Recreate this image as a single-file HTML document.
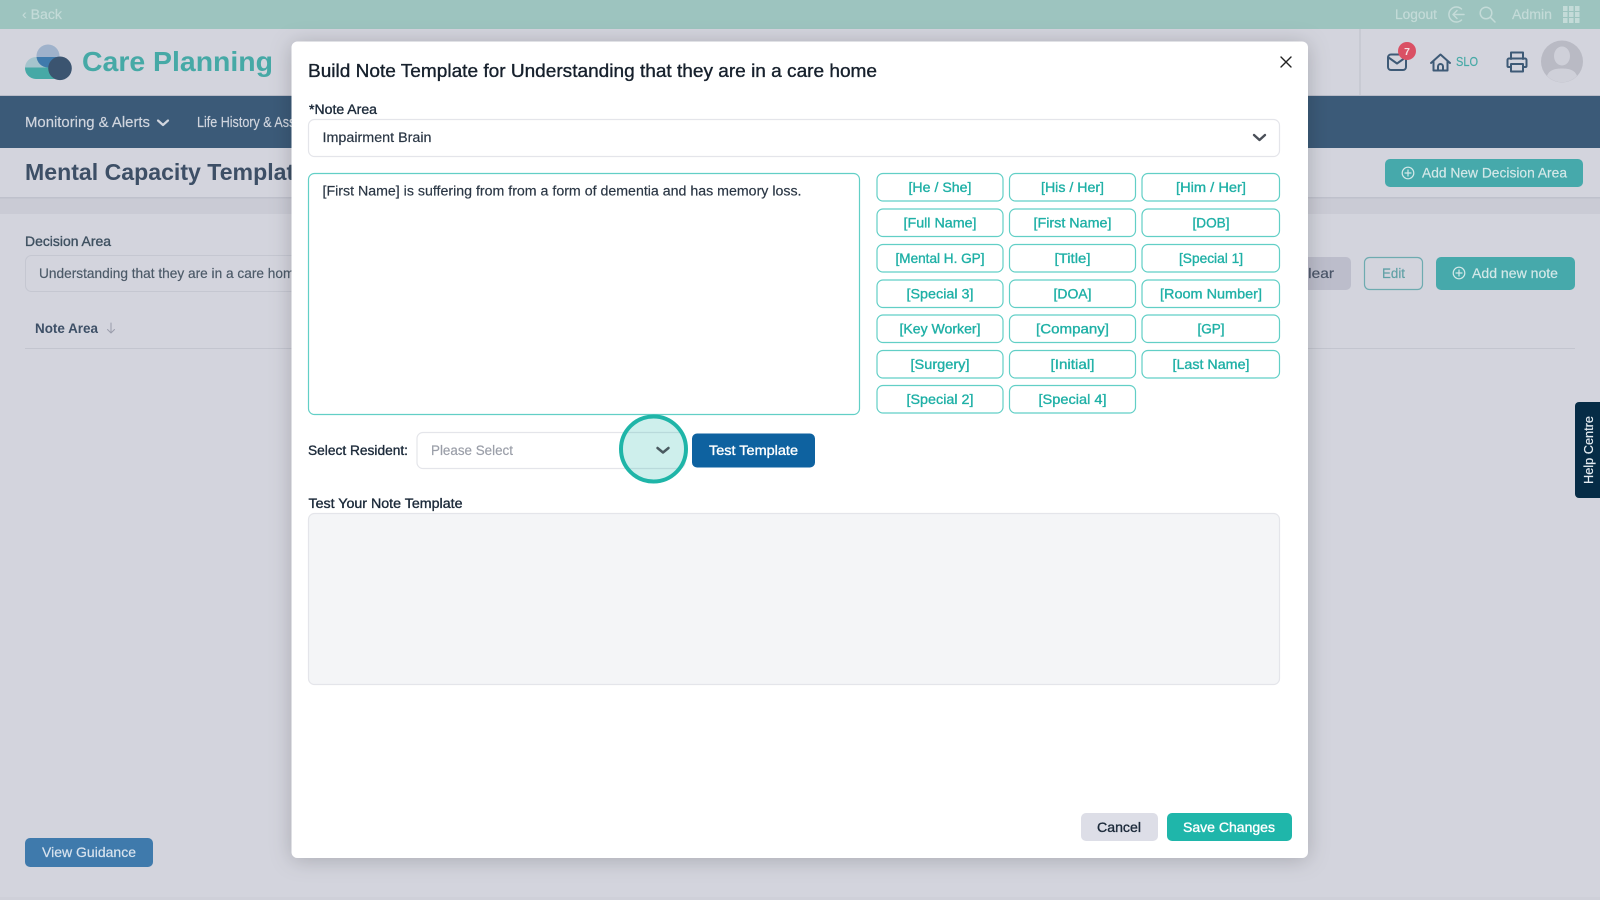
<!DOCTYPE html>
<html lang="en">
<head>
<meta charset="utf-8">
<title>Care Planning</title>
<style>
html,body{margin:0;padding:0;width:1600px;height:900px;overflow:hidden;background:#d3d4dd}
svg{display:block;font-family:"Liberation Sans",sans-serif}
text{white-space:pre;stroke-width:.18}
.m{stroke:currentColor;stroke-width:.35}
.chip rect{fill:#fff;stroke:#62cfc6;stroke-width:1.2}
.chip text{fill:#1fb0a6;color:#1fb0a6;font-size:14px;text-anchor:middle;stroke:currentColor;stroke-width:.35}
.i{fill:none;stroke-linecap:round;stroke-linejoin:round}
</style>
</head>
<body>
<svg xmlns="http://www.w3.org/2000/svg" width="1600" height="900" viewBox="0 0 1600 900">
<defs>
<clipPath id="pill"><path d="M36 79a11 11 0 0 1 0-22h24v22z"/></clipPath>
<clipPath id="top"><circle cx="48" cy="56" r="11.5"/></clipPath>
<filter id="sh" x="-5%" y="-8%" width="110%" height="116%"><feDropShadow dx="0" dy="2" stdDeviation="11" flood-color="#000" flood-opacity=".2"/></filter>
</defs>

<!-- page -->
<rect width="1600" height="900" fill="#d3d4dd"/>
<rect width="1600" height="29" fill="#9dc4bf"/>
<text x="22" y="19" font-size="13.5" textLength="40" lengthAdjust="spacingAndGlyphs" fill="#c4dbd8" stroke="#c4dbd8">‹ Back</text>
<text x="1395" y="19" font-size="13.5" textLength="42" lengthAdjust="spacingAndGlyphs" fill="#c4dbd8" stroke="#c4dbd8">Logout</text>
<g class="i" stroke="#c4dbd8" stroke-width="1.5">
<path d="M1461.500 9a7.500 7.500 0 1 0 0 11"/><path d="M1464 14.500h-11M1457 10.500l-4 4 4 4"/>
<circle cx="1486" cy="13" r="5.800"/><path d="M1490.500 17.500l4.500 4.500"/>
</g>
<text x="1512" y="19" font-size="13.5" textLength="40" lengthAdjust="spacingAndGlyphs" fill="#c4dbd8" stroke="#c4dbd8">Admin</text>
<g fill="#c4dbd8">
<rect x="1563" y="6" width="4.500" height="5"/><rect x="1569" y="6" width="4.500" height="5"/><rect x="1575" y="6" width="4.500" height="5"/>
<rect x="1563" y="12" width="4.500" height="5"/><rect x="1569" y="12" width="4.500" height="5"/><rect x="1575" y="12" width="4.500" height="5"/>
<rect x="1563" y="18" width="4.500" height="5"/><rect x="1569" y="18" width="4.500" height="5"/><rect x="1575" y="18" width="4.500" height="5"/>
</g>

<!-- logo -->
<circle cx="48" cy="56" r="11.5" fill="#9fb2cb"/>
<g clip-path="url(#pill)">
<rect x="25" y="57" width="36" height="10.500" fill="#a5c4cd"/>
<rect x="25" y="67.500" width="36" height="12" fill="#46a9a6"/>
<rect x="25" y="57" width="36" height="23" fill="#3f7aac" clip-path="url(#top)"/>
</g>
<circle cx="60" cy="68.300" r="11.800" fill="#3b5470"/>
<text x="82" y="71" font-size="28" font-weight="700" textLength="191" lengthAdjust="spacingAndGlyphs" fill="#46a9a6">Care Planning</text>

<!-- header right -->
<rect x="1359" y="29" width="2" height="67" fill="#c8cad3"/>
<g class="i" stroke="#3e5a76" stroke-width="2">
<rect x="1388" y="54.500" width="18" height="15.500" rx="3"/>
<path d="M1388.500 57.500l8.500 6 8.500-6"/>
<path d="M1431 63l9.500-8.500 9.500 8.500M1433.500 61v9.500h14V61"/>
<path d="M1438 70.500v-4a2.500 2.500 0 0 1 5 0v4"/>
<path d="M1511 59v-6.500h12V59"/>
<path d="M1511 67h-2.500a1 1 0 0 1-1-1v-6a1.500 1.500 0 0 1 1.500-1.500h16a1.500 1.500 0 0 1 1.500 1.500v6a1 1 0 0 1-1 1H1523"/>
<rect x="1511" y="64" width="12" height="7.500"/>
</g>
<circle cx="1407" cy="51" r="9" fill="#da5064"/>
<text x="1407" y="55" font-size="10.5" font-weight="700" text-anchor="middle" fill="#f4dfe2">7</text>
<text x="1456" y="66" font-size="13" textLength="22" lengthAdjust="spacingAndGlyphs" fill="#46a9a6" stroke="#46a9a6">SLO</text>
<circle cx="1562" cy="61.500" r="21" fill="#b9bac4"/>
<ellipse cx="1562" cy="56" rx="8" ry="9.500" fill="#cfd0d9"/>
<path d="M1547 76c2-6 8-7.500 15-7.500s13 1.500 15 7.500a21 21 0 0 1-30 0z" fill="#cfd0d9"/>

<!-- nav -->
<rect y="96" width="1600" height="52" fill="#3b5a78"/>
<rect y="95" width="1600" height="1" fill="#b9bcc8"/>
<text x="25" y="127" font-size="14.5" textLength="125" lengthAdjust="spacingAndGlyphs" fill="#d0d5de" stroke="#d0d5de">Monitoring &amp; Alerts</text>
<path class="i" d="M158 120.500l5 4.500 5-4.500" stroke="#d0d5de" stroke-width="2.200"/>
<text x="197" y="127" font-size="14.5" textLength="152" lengthAdjust="spacingAndGlyphs" fill="#d0d5de" stroke="#d0d5de">Life History &amp; Assessments</text>

<!-- title row -->
<text x="25" y="180" font-size="23" font-weight="700" textLength="282" lengthAdjust="spacingAndGlyphs" fill="#3d4f66">Mental Capacity Template</text>
<rect x="1385" y="159" width="198" height="28" rx="5" fill="#46a9ab"/>
<g class="i" stroke="#d3e8e8" stroke-width="1.2">
<circle cx="1408" cy="173" r="5.800"/><path d="M1408 170v6M1405 173h6"/>
</g>
<text x="1422" y="177.500" font-size="14" textLength="145" lengthAdjust="spacingAndGlyphs" fill="#d3e8e8" stroke="#d3e8e8">Add New Decision Area</text>
<rect y="197" width="1600" height="17" fill="#cacbd5"/>
<rect y="197" width="1600" height="1.5" fill="#bfc1cc"/>

<!-- content -->
<text class="m" color="#3e5060" x="25" y="246" font-size="13.5" textLength="86" lengthAdjust="spacingAndGlyphs" fill="#3e5060">Decision Area</text>
<rect x="25.500" y="255.500" width="300" height="36" rx="6" fill="#d3d4dd" stroke="#c5c7d1"/>
<text x="39" y="278" font-size="14" textLength="263" lengthAdjust="spacingAndGlyphs" fill="#4c5a68" stroke="#4c5a68">Understanding that they are in a care home</text>
<text x="35" y="333" font-size="13.5" font-weight="700" textLength="63" lengthAdjust="spacingAndGlyphs" fill="#3d4f66">Note Area</text>
<path class="i" d="M111 323v10M107.500 329.500l3.500 3.500 3.500-3.500" stroke="#9a9dab" stroke-width="1"/>
<rect x="25" y="348" width="1550" height="1" fill="#c3c5cf"/>

<rect x="1290" y="257" width="61" height="33" rx="5" fill="#bcbdcb"/>
<text x="1297" y="278" font-size="14" textLength="37" lengthAdjust="spacingAndGlyphs" fill="#4a5568" stroke="#4a5568">Clear</text>
<rect x="1364.500" y="257.500" width="58" height="32" rx="5" fill="none" stroke="#6eabb0" stroke-width="1.2"/>
<text x="1382" y="278" font-size="13.5" textLength="23" lengthAdjust="spacingAndGlyphs" fill="#5fa0a5" stroke="#5fa0a5">Edit</text>
<rect x="1436" y="257" width="139" height="33" rx="5" fill="#46a9ab"/>
<g class="i" stroke="#d3e8e8" stroke-width="1.2">
<circle cx="1459" cy="273" r="5.800"/><path d="M1459 270v6M1456 273h6"/>
</g>
<text x="1472" y="278" font-size="14" textLength="86" lengthAdjust="spacingAndGlyphs" fill="#d3e8e8" stroke="#d3e8e8">Add new note</text>

<path d="M1600 402h-21a4 4 0 0 0-4 4v88a4 4 0 0 0 4 4h21z" fill="#062c46"/>
<text transform="translate(1593 484) rotate(-90)" x="0" y="0" font-size="13" textLength="68" lengthAdjust="spacingAndGlyphs" fill="#e6edf2" stroke="#e6edf2">Help Centre</text>

<rect x="25" y="838" width="128" height="29" rx="5" fill="#3f7aac"/>
<text x="42" y="857" font-size="14" textLength="94" lengthAdjust="spacingAndGlyphs" fill="#d8e3ee" stroke="#d8e3ee">View Guidance</text>
<rect y="897" width="1600" height="3" fill="#cfd0d9"/>

<!-- modal -->
<rect x="291.500" y="41.500" width="1016.500" height="816.500" rx="6" fill="#fff" filter="url(#sh)"/>
<text class="m" color="#16202c" x="308" y="77" font-size="18" textLength="569" lengthAdjust="spacingAndGlyphs" fill="#16202c">Build Note Template for Understanding that they are in a care home</text>
<path class="i" d="M1281 57l10 10M1291 57l-10 10" stroke="#222" stroke-width="1.4"/>

<text class="m" color="#1c2a3a" x="309" y="114" font-size="13.5" textLength="68" lengthAdjust="spacingAndGlyphs" fill="#1c2a3a">*Note Area</text>
<rect x="308.500" y="119.500" width="971" height="37" rx="6" fill="#fff" stroke="#e4e5ea" stroke-width="1.2"/>
<text x="322.500" y="142" font-size="13.5" textLength="109" lengthAdjust="spacingAndGlyphs" fill="#2a3644" stroke="#2a3644">Impairment Brain</text>
<path class="i" d="M1254 135l5.500 5 5.500-5" stroke="#4a4f58" stroke-width="2.4"/>

<rect x="308.500" y="173.500" width="551" height="241" rx="6" fill="#fff" stroke="#62cfc6" stroke-width="1.2"/>
<text x="322.500" y="195.500" font-size="13.5" textLength="479" lengthAdjust="spacingAndGlyphs" fill="#2a3644" stroke="#2a3644">[First Name] is suffering from from a form of dementia and has memory loss.</text>

<g class="chip">
<rect x="877" y="173.500" width="126" height="27.5" rx="6"/><text x="940" y="192" textLength="63" lengthAdjust="spacingAndGlyphs">[He / She]</text>
<rect x="1009.500" y="173.500" width="126" height="27.5" rx="6"/><text x="1072.500" y="192" textLength="63" lengthAdjust="spacingAndGlyphs">[His / Her]</text>
<rect x="1142" y="173.500" width="137.500" height="27.5" rx="6"/><text x="1211" y="192" textLength="70" lengthAdjust="spacingAndGlyphs">[Him / Her]</text>

<rect x="877" y="209" width="126" height="27.5" rx="6"/><text x="940" y="227.500" textLength="73" lengthAdjust="spacingAndGlyphs">[Full Name]</text>
<rect x="1009.500" y="209" width="126" height="27.5" rx="6"/><text x="1072.500" y="227.500" textLength="78" lengthAdjust="spacingAndGlyphs">[First Name]</text>
<rect x="1142" y="209" width="137.500" height="27.5" rx="6"/><text x="1211" y="227.500" textLength="37" lengthAdjust="spacingAndGlyphs">[DOB]</text>

<rect x="877" y="244.500" width="126" height="27.5" rx="6"/><text x="940" y="263" textLength="89" lengthAdjust="spacingAndGlyphs">[Mental H. GP]</text>
<rect x="1009.500" y="244.500" width="126" height="27.5" rx="6"/><text x="1072.500" y="263" textLength="36" lengthAdjust="spacingAndGlyphs">[Title]</text>
<rect x="1142" y="244.500" width="137.500" height="27.5" rx="6"/><text x="1211" y="263" textLength="64" lengthAdjust="spacingAndGlyphs">[Special 1]</text>

<rect x="877" y="280" width="126" height="27.5" rx="6"/><text x="940" y="298.500" textLength="67" lengthAdjust="spacingAndGlyphs">[Special 3]</text>
<rect x="1009.500" y="280" width="126" height="27.5" rx="6"/><text x="1072.500" y="298.500" textLength="38" lengthAdjust="spacingAndGlyphs">[DOA]</text>
<rect x="1142" y="280" width="137.500" height="27.5" rx="6"/><text x="1211" y="298.500" textLength="102" lengthAdjust="spacingAndGlyphs">[Room Number]</text>

<rect x="877" y="315" width="126" height="27.5" rx="6"/><text x="940" y="333.500" textLength="81" lengthAdjust="spacingAndGlyphs">[Key Worker]</text>
<rect x="1009.500" y="315" width="126" height="27.5" rx="6"/><text x="1072.500" y="333.500" textLength="73" lengthAdjust="spacingAndGlyphs">[Company]</text>
<rect x="1142" y="315" width="137.500" height="27.5" rx="6"/><text x="1211" y="333.500" textLength="27" lengthAdjust="spacingAndGlyphs">[GP]</text>

<rect x="877" y="350.500" width="126" height="27.5" rx="6"/><text x="940" y="369" textLength="59" lengthAdjust="spacingAndGlyphs">[Surgery]</text>
<rect x="1009.500" y="350.500" width="126" height="27.5" rx="6"/><text x="1072.500" y="369" textLength="44" lengthAdjust="spacingAndGlyphs">[Initial]</text>
<rect x="1142" y="350.500" width="137.500" height="27.5" rx="6"/><text x="1211" y="369" textLength="77" lengthAdjust="spacingAndGlyphs">[Last Name]</text>

<rect x="877" y="385.500" width="126" height="27.5" rx="6"/><text x="940" y="404" textLength="67" lengthAdjust="spacingAndGlyphs">[Special 2]</text>
<rect x="1009.500" y="385.500" width="126" height="27.5" rx="6"/><text x="1072.500" y="404" textLength="68" lengthAdjust="spacingAndGlyphs">[Special 4]</text>
</g>

<text class="m" color="#1c2a3a" x="308" y="455" font-size="13.5" textLength="100" lengthAdjust="spacingAndGlyphs" fill="#1c2a3a">Select Resident:</text>
<rect x="417" y="432.500" width="268" height="36" rx="6" fill="#fff" stroke="#e4e5ea" stroke-width="1.2"/>
<text x="431" y="455" font-size="13.5" textLength="82" lengthAdjust="spacingAndGlyphs" fill="#9a9ea8" stroke="#9a9ea8">Please Select</text>
<circle cx="653.5" cy="449" r="32.5" fill="#1fb5a8" fill-opacity=".22" stroke="#1fb5a8" stroke-width="4"/>
<path class="i" d="M657.500 448l5.500 4.500 5.500-4.500" stroke="#4a5a60" stroke-width="2.500"/>
<rect x="692" y="433.500" width="123" height="34" rx="5" fill="#0e62a0"/>
<text class="m" color="#fff" x="709" y="455" font-size="13.5" textLength="89" lengthAdjust="spacingAndGlyphs" fill="#fff">Test Template</text>

<text class="m" color="#1c2a3a" x="308.500" y="508" font-size="13.5" textLength="154" lengthAdjust="spacingAndGlyphs" fill="#1c2a3a">Test Your Note Template</text>
<rect x="308.500" y="513.500" width="971" height="171" rx="6" fill="#f4f5f7" stroke="#e4e5ea" stroke-width="1.2"/>

<rect x="1081" y="813" width="77" height="28" rx="5" fill="#dddee7"/>
<text class="m" color="#1c2a3a" x="1097" y="832" font-size="14" textLength="44" lengthAdjust="spacingAndGlyphs" fill="#1c2a3a">Cancel</text>
<rect x="1167" y="813" width="125" height="28" rx="5" fill="#1fb6aa"/>
<text class="m" color="#fff" x="1183" y="832" font-size="14" textLength="92" lengthAdjust="spacingAndGlyphs" fill="#fff">Save Changes</text>
</svg>
</body>
</html>
